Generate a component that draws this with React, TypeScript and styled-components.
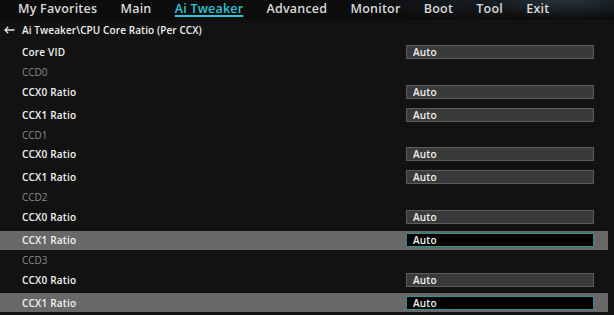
import styled, { createGlobalStyle } from "styled-components";

const GlobalStyle = createGlobalStyle`
  html, body {
    margin: 0;
    padding: 0;
    background: #121212;
  }
  body {
    font-family: "Open Sans", "Liberation Sans", sans-serif;
    overflow: hidden;
  }
`

type Item =
  | { kind: "group"; label: string }
  | { kind: "setting"; label: string; value: string; selected?: boolean };

const items: Item[] = [
  { kind: "setting", label: "Core VID", value: "Auto" },
  { kind: "group", label: "CCD0" },
  { kind: "setting", label: "CCX0 Ratio", value: "Auto" },
  { kind: "setting", label: "CCX1 Ratio", value: "Auto" },
  { kind: "group", label: "CCD1" },
  { kind: "setting", label: "CCX0 Ratio", value: "Auto" },
  { kind: "setting", label: "CCX1 Ratio", value: "Auto" },
  { kind: "group", label: "CCD2" },
  { kind: "setting", label: "CCX0 Ratio", value: "Auto" },
  { kind: "setting", label: "CCX1 Ratio", value: "Auto", selected: true },
  { kind: "group", label: "CCD3" },
  { kind: "setting", label: "CCX0 Ratio", value: "Auto" },
  { kind: "setting", label: "CCX1 Ratio", value: "Auto", selected: true },
];

const tabs = ["My Favorites", "Main", "Ai Tweaker", "Advanced", "Monitor", "Boot", "Tool", "Exit"];

const App = () => {
  return (
    <Page>
      <GlobalStyle />
      <TopBar>
        {tabs.map((t) => (
          <Tab key={t} $active={t === "Ai Tweaker"}>{t}</Tab>
        ))}
      </TopBar>
      <Crumb>
        <Back>
          <svg width="11" height="8" viewBox="0 0 11 8">
            <path d="M10.5 4H1.2M4.2 0.8L1 4l3.2 3.2" stroke="#e6e6e6" strokeWidth="1.3" fill="none" />
          </svg>
        </Back>
        Ai Tweaker\CPU Core Ratio (Per CCX)
      </Crumb>
      <List>
        {items.map((it, i) =>
          it.kind === "group" ? (
            <Group key={i}>{it.label}</Group>
          ) : (
            <Row key={i} $selected={!!it.selected}>
              <Label>{it.label}</Label>
              <ValueBox $selected={!!it.selected}>{it.value}</ValueBox>
            </Row>
          )
        )}
      </List>
    </Page>
  )
}

export default App;

const Page = styled.div`
  width: 614px;
  height: 315px;
  background: #121212;
  color: #eeeeee;
  overflow: hidden;
`
const TopBar = styled.div`
  height: 20px;
  display: flex;
  align-items: flex-start;
  gap: 23.3px;
  padding-left: 18px;
  box-sizing: border-box;
  background:
    radial-gradient(ellipse 90px 20px at 570px 0px, rgba(70, 95, 120, 0.45), transparent),
    radial-gradient(ellipse 120px 18px at 470px 2px, rgba(40, 55, 70, 0.35), transparent),
    #0c0c0c;
`
const Tab = styled.div<{ $active: boolean }>`
  font-size: 12.5px;
  font-weight: 600;
  line-height: 17px;
  letter-spacing: 0.2px;
  color: ${(p) => (p.$active ? "#2ec5d6" : "#d9d9d9")};
  text-decoration: ${(p) => (p.$active ? "underline" : "none")};
  text-decoration-thickness: 1.5px;
  text-underline-offset: 2px;
`
const Crumb = styled.div`
  height: 20px;
  display: flex;
  align-items: center;
  font-size: 10px;
  font-weight: 550;
  letter-spacing: 0.1px;
  color: #f0f0f0;
  padding-left: 4px;
`
const Back = styled.span`
  display: inline-flex;
  width: 18px;
`
const List = styled.div`
  display: flex;
  flex-direction: column;
  width: 608px;
  margin-top: 0.5px;
`
const Group = styled.div`
  height: 16.7px;
  display: flex;
  align-items: center;
  padding-left: 22px;
  font-size: 10px;
  color: #8a8a8a;
`
const Row = styled.div<{ $selected: boolean }>`
  height: 19px;
  margin: 2px 0;
  display: flex;
  align-items: center;
  padding: 0 14px 0 22px;
  background: ${(p) => (p.$selected ? "#686868" : "transparent")};
`
const Label = styled.div`
  flex: 1;
  font-size: 10px;
  font-weight: 560;
  letter-spacing: 0.2px;
  color: #f2f2f2;
`
const ValueBox = styled.div<{ $selected: boolean }>`
  width: 188px;
  height: 14px;
  box-sizing: border-box;
  display: flex;
  align-items: center;
  padding-left: 6px;
  font-size: 10px;
  font-weight: 550;
  letter-spacing: 0.2px;
  color: #f2f2f2;
  background: ${(p) => (p.$selected ? "#000000" : "#3a3a3a")};
  border: 1px solid ${(p) => (p.$selected ? "#2a8f94" : "#5c5c5c")};
`
